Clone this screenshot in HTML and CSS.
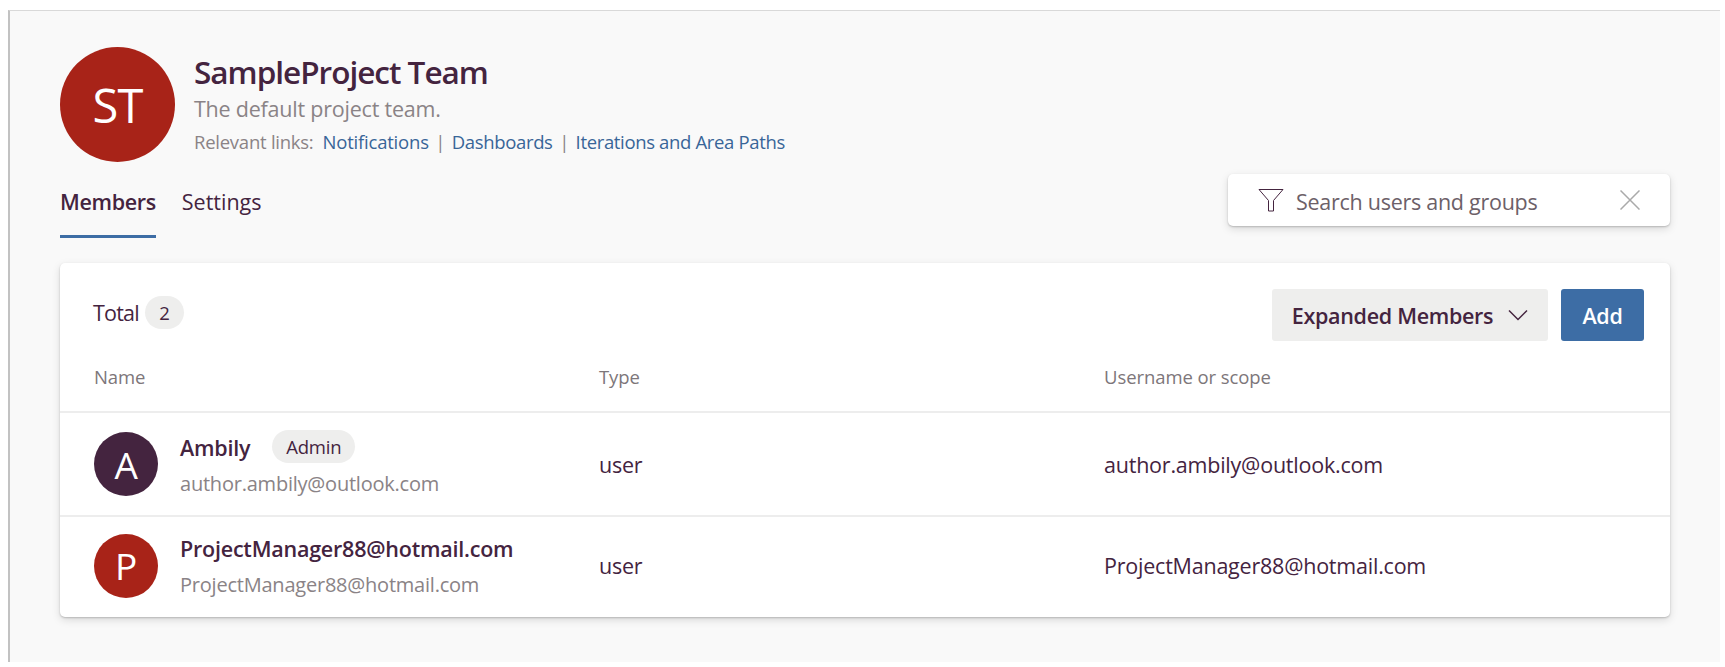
FILE: index.html
```html
<!DOCTYPE html>
<html lang="en">
<head>
<meta charset="utf-8">
<title>SampleProject Team</title>
<link rel="stylesheet" href="styles.css">
</head>
<body>
<main class="panel">
  <header class="team">
    <div class="avatar avatar-lg">ST</div>
    <div class="team-info">
      <h1 class="team-name">SampleProject Team</h1>
      <p class="team-desc">The default project team.</p>
      <p class="team-links"><span class="label">Relevant links:</span><a>Notifications</a><span class="sep">|</span><a class="tight">Dashboards</a><span class="sep">|</span><a class="tight">Iterations and Area Paths</a></p>
    </div>
  </header>
  <div class="nav">
    <div class="tab active">Members</div>
    <div class="tab">Settings</div>
    <div class="search">
      <svg class="funnel" width="26" height="24" viewBox="0 0 26 24"><path d="M1 1.5h24L15.500 12.500v10.500h-5V12.500z"/></svg>
      <span class="query">Search users and groups</span>
      <svg class="clear" width="20" height="20" viewBox="0 0 20 20"><path d="M0.500 0.500l19 19M19.500 0.500l-19 19"/></svg>
    </div>
  </div>
  <section class="card">
    <div class="toolbar">
      <div class="summary"><span class="total">Total</span><span class="pill count">2</span></div>
      <div class="button expand"><span>Expanded Members</span>
        <svg width="20" height="12" viewBox="0 0 20 12"><path d="M1 1.500l9 9 9-9"/></svg></div>
      <div class="button primary">Add</div>
    </div>
    <div class="grid head"><span>Name</span><span>Type</span><span>Username or scope</span></div>
    <div class="grid row first">
      <div class="member">
        <div class="avatar plum">A</div>
        <div class="who">
          <div class="name">Ambily<span class="pill admin">Admin</span></div>
          <div class="mail">author.ambily@outlook.com</div>
        </div>
      </div>
      <span>user</span><span>author.ambily@outlook.com</span>
    </div>
    <div class="grid row">
      <div class="member">
        <div class="avatar">P</div>
        <div class="who">
          <div class="name">ProjectManager88@hotmail.com</div>
          <div class="mail">ProjectManager88@hotmail.com</div>
        </div>
      </div>
      <span>user</span><span>ProjectManager88@hotmail.com</span>
    </div>
  </section>
</main>
</body>
</html>
```
FILE: styles.css
```css
* { box-sizing: border-box; }
body { margin: 0; padding: 10px 5px 0 8px; background: #fff; color: #44243f; font-family: "Open Sans", "Noto Sans", sans-serif; font-size: 21.5px; letter-spacing: -0.22px; }
h1, p { margin: 0; }
svg { fill: none; flex: none; }
.panel { height: 652px; background: #f9f9f9; border-left: 2px solid #c2c2c2; border-top: 1px solid #d9d9d9; padding: 36px 50px 0; }
.team { display: flex; gap: 19px; height: 116px; }
.avatar { display: flex; align-items: center; justify-content: center; flex: none; width: 64px; height: 64px; border-radius: 50%; background: #a82318; color: #fff; font-size: 37px; }
.avatar-lg { width: 115px; height: 115px; font-size: 47px; letter-spacing: -0.8px; }
.plum { background: #44243f; }
.team-info { padding-top: 5px; white-space: nowrap; }
.team-name { font-size: 31.5px; font-weight: 600; line-height: 40px; letter-spacing: -1px; }
.team-desc { color: #8a8386; line-height: 33px; }
.team-links { display: flex; font-size: 18.5px; line-height: 34px; letter-spacing: -0.25px; color: #8a8386; }
.team-links a { color: #386598; letter-spacing: -0.2px; }
.team-links .tight { letter-spacing: -0.35px; }
.sep { width: 23px; text-align: center; }
.label { margin-right: 9px; }
.nav { display: flex; height: 75px; }
.tab { height: 75px; line-height: 77px; margin-right: 26px; letter-spacing: 0; }
.active { font-weight: 600; letter-spacing: -0.35px; border-bottom: 3px solid #3d6da5; }
.search { display: flex; align-items: center; width: 442px; height: 52px; margin: 11px 0 0 auto; padding: 0 30px; background: #fff; border-radius: 5px; box-shadow: 0 3px 8px rgba(0,0,0,.13), 0 1px 2px rgba(0,0,0,.2); }
.funnel { stroke: #44243f; }
.query { margin-left: 12px; padding-top: 2px; color: #6c6068; letter-spacing: -0.27px; }
.clear { stroke: #aaa; stroke-width: 1.5; margin-left: auto; }
.card { margin-top: 25px; height: 354px; background: #fff; border-radius: 5px; box-shadow: 0 3px 8px rgba(0,0,0,.13), 0 1px 2px rgba(0,0,0,.2); }
.toolbar { display: flex; align-items: center; height: 98px; padding: 6px 26px 0 33px; }
.summary { display: flex; align-items: center; padding-bottom: 6px; }
.total { width: 52px; letter-spacing: -0.8px; }
.pill { background: #eeeeed; border-radius: 17px; height: 33px; font-size: 18.5px; line-height: 33px; font-weight: 400; }
.count { width: 39px; text-align: center; }
.button { height: 52px; border-radius: 3px; background: #eeeeed; font-weight: 600; display: flex; align-items: center; justify-content: center; gap: 15px; letter-spacing: -0.3px; }
.expand { margin-left: auto; width: 276px; }
.expand svg { stroke: #44243f; stroke-width: 1.5; }
.primary { margin-left: 13px; width: 83px; background: #3d6da5; color: #fff; }
.grid { display: grid; grid-template-columns: 505px 505px 1fr; align-items: center; padding-left: 34px; }
.head { height: 50px; font-size: 18.5px; letter-spacing: -0.08px; color: #7d767a; padding-bottom: 19px; }
.row { height: 101px; border-top: 2px solid #ededed; padding-bottom: 2px; }
.first { height: 104px; padding-bottom: 0; }
.member { display: flex; align-items: center; gap: 22px; }
.who { padding-top: 3px; }
.name { font-weight: 600; line-height: 36px; display: flex; }
.mail { font-size: 20px; line-height: 36px; color: #8a8386; }
.admin { width: 83px; margin-left: 22px; text-align: center; }
```
